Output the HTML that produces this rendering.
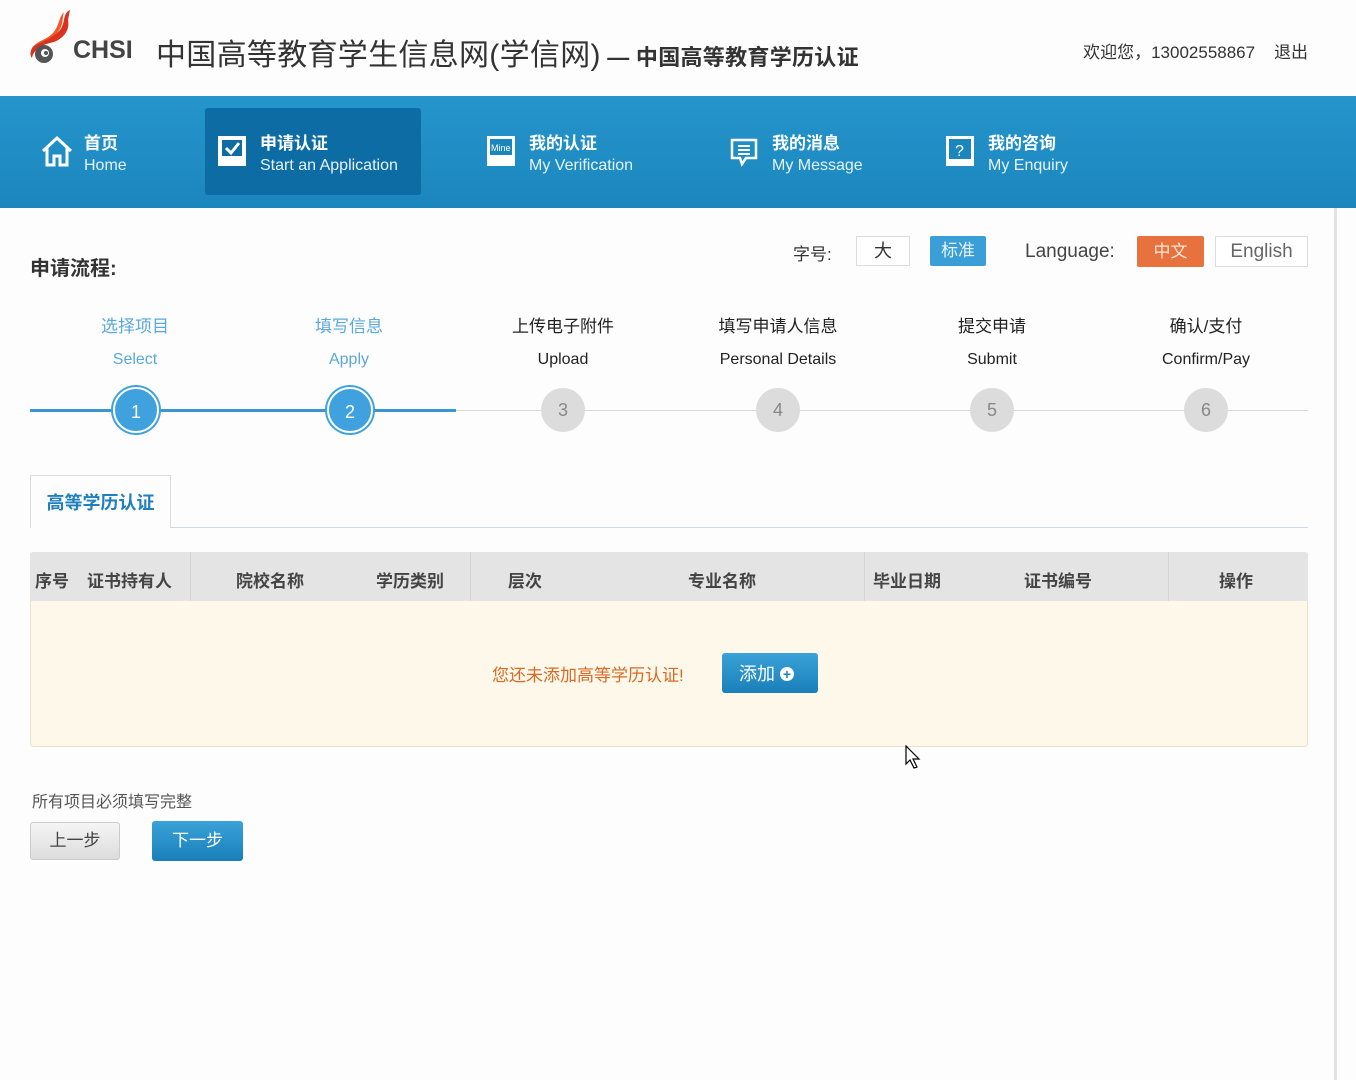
<!DOCTYPE html>
<html><head><meta charset="utf-8"><style>
*{margin:0;padding:0;box-sizing:border-box}
body{width:1356px;height:1080px;background:#fdfdfd;font-family:"Liberation Sans","Noto Sans CJK SC",sans-serif;position:relative;overflow:hidden;color:#333}
.a{position:absolute}
.nav{left:0;top:96px;width:1356px;height:112px;background:linear-gradient(#2595cc,#1b86bd)}
.item{top:108px;height:87px;color:#fff}
.item .t1{position:absolute;top:21px;font-size:17px;font-weight:bold;white-space:nowrap}
.item .t2{position:absolute;top:49px;font-size:16px;color:#e6f3fb;white-space:nowrap}
.step{width:160px;text-align:center;font-size:17px}
.c{width:46px;height:46px;border-radius:50%;text-align:center;line-height:46px;font-size:18px}
.cb{background:#3fa1de;color:#fff;border:2px solid #fff;box-shadow:0 0 0 2px #3fa1de}
.cg{background:#dcdcdc;color:#888;width:44px;height:44px;line-height:44px}
.th{top:567px;font-size:17px;font-weight:bold;color:#444}
</style></head><body>
<svg class="a" style="left:26px;top:8px" width="50" height="58" viewBox="0 0 50 58">
<path d="M44 2 C36 6 40 14 34 22 C28 30 14 30 6 40 C4 44 4 48 6 50 C8 40 18 36 28 34 C38 30 44 22 42 12 Z" fill="#d9321f"/>
<path d="M38 4 C32 10 34 18 26 26 C22 30 12 34 8 38 C16 34 26 30 32 24 C38 16 36 10 38 4Z" fill="#f05a2a"/>
<circle cx="18" cy="46" r="9" fill="#555"/><circle cx="19" cy="45" r="4" fill="#fff"/><circle cx="20" cy="45" r="2" fill="#555"/>
</svg>
<div class="a" style="left:73px;top:36px;font-size:25px;font-weight:bold;color:#444">CHSI</div>
<div class="a" style="left:156px;top:30px;font-size:30px;color:#333;white-space:nowrap;letter-spacing:0.3px">中国高等教育学生信息网(学信网)<span style="font-size:22px;font-weight:bold"> — 中国高等教育学历认证</span></div>
<div class="a" style="right:48px;top:38px;font-size:17px;color:#333;white-space:nowrap">欢迎您，13002558867 &nbsp;&nbsp;&nbsp;退出</div>
<div class="a nav"></div>
<div class="a" style="left:205px;top:108px;width:216px;height:87px;background:#0d6ca3;border-radius:3px"></div>
<div class="a item" style="left:40px">
<svg class="a" style="left:0;top:26px" width="34" height="34" viewBox="0 0 34 34"><path d="M3 17 L17 4 L31 17 M7 14 V31 H14 V22 H20 V31 H27 V14" fill="none" stroke="#fff" stroke-width="3"/></svg>
<div class="t1" style="left:44px">首页</div><div class="t2" style="left:44px">Home</div></div>
<div class="a item" style="left:216px">
<svg class="a" style="left:0;top:26px" width="34" height="34" viewBox="0 0 34 34"><rect x="2" y="2" width="28" height="30" fill="#fff"/><rect x="6" y="6" width="20" height="16" fill="#0d6ca3"/><path d="M10 14 L15 19 L23 9" stroke="#fff" stroke-width="3" fill="none"/></svg>
<div class="t1" style="left:44px">申请认证</div><div class="t2" style="left:44px">Start an Application</div></div>
<div class="a item" style="left:485px">
<svg class="a" style="left:0;top:26px" width="34" height="34" viewBox="0 0 34 34"><rect x="2" y="2" width="28" height="30" fill="#fff"/><rect x="5" y="5" width="22" height="16" fill="#1b86bd"/><text x="6" y="17" font-size="9" fill="#fff" font-family="Liberation Sans">Mine</text></svg>
<div class="t1" style="left:44px">我的认证</div><div class="t2" style="left:44px">My Verification</div></div>
<div class="a item" style="left:728px">
<svg class="a" style="left:0;top:28px" width="34" height="34" viewBox="0 0 34 34"><path d="M4 4 H28 V22 H18 L14 28 L12 22 H4 Z" fill="none" stroke="#fff" stroke-width="2.5"/><path d="M10 10 H22 M10 14 H22 M10 18 H22" stroke="#fff" stroke-width="2"/></svg>
<div class="t1" style="left:44px">我的消息</div><div class="t2" style="left:44px">My Message</div></div>
<div class="a item" style="left:944px">
<svg class="a" style="left:0;top:26px" width="34" height="34" viewBox="0 0 34 34"><rect x="2" y="2" width="28" height="30" fill="#fff"/><rect x="5" y="5" width="22" height="20" fill="#1b86bd"/><text x="11" y="22" font-size="16" fill="#fff" font-family="Liberation Sans">?</text></svg>
<div class="t1" style="left:44px">我的咨询</div><div class="t2" style="left:44px">My Enquiry</div></div>
<div class="a" style="left:1334px;top:208px;width:3px;height:872px;background:#e2e2e2"></div>
<div class="a" style="left:30px;top:252px;font-size:20px;font-weight:bold;color:#333">申请流程:</div>
<div class="a" style="left:793px;top:240px;font-size:17px">字号:</div>
<div class="a" style="left:856px;top:236px;width:54px;height:30px;border:1px solid #ddd;background:#fff;text-align:center;line-height:28px;font-size:18px">大</div>
<div class="a" style="left:930px;top:236px;width:56px;height:30px;background:#3a9fd6;color:#e8f4fb;text-align:center;line-height:30px;font-size:17px;border-radius:2px">标准</div>
<div class="a" style="left:1025px;top:241px;font-size:19px;color:#444">Language:</div>
<div class="a" style="left:1137px;top:236px;width:67px;height:31px;background:#e8723d;color:#fde5d8;text-align:center;line-height:31px;font-size:17px;border-radius:2px">中文</div>
<div class="a" style="left:1215px;top:236px;width:93px;height:31px;border:1px solid #ddd;background:#fff;text-align:center;line-height:29px;font-size:19px;color:#666">English</div>
<div class="a" style="left:30px;top:409px;width:426px;height:3px;background:#3a96d2"></div>
<div class="a" style="left:456px;top:410px;width:852px;height:1px;background:#d8d8d8"></div>
<div class="a step" style="left:55px;top:312px;color:#5aa9dc">选择项目<br><span style="font-size:16px;line-height:46px">Select</span></div>
<div class="a step" style="left:269px;top:312px;color:#5aa9dc">填写信息<br><span style="font-size:16px;line-height:46px">Apply</span></div>
<div class="a step" style="left:483px;top:312px;color:#222">上传电子附件<br><span style="font-size:16px;line-height:46px">Upload</span></div>
<div class="a step" style="left:688px;top:312px;width:180px;color:#222">填写申请人信息<br><span style="font-size:16px;line-height:46px">Personal Details</span></div>
<div class="a step" style="left:912px;top:312px;color:#222">提交申请<br><span style="font-size:16px;line-height:46px">Submit</span></div>
<div class="a step" style="left:1126px;top:312px;color:#222">确认/支付<br><span style="font-size:16px;line-height:46px">Confirm/Pay</span></div>
<div class="a c cb" style="left:113px;top:387px">1</div>
<div class="a c cb" style="left:327px;top:387px">2</div>
<div class="a c cg" style="left:541px;top:388px">3</div>
<div class="a c cg" style="left:756px;top:388px">4</div>
<div class="a c cg" style="left:970px;top:388px">5</div>
<div class="a c cg" style="left:1184px;top:388px">6</div>
<div class="a" style="left:30px;top:527px;width:1278px;height:1px;background:#cfd8e6"></div>
<div class="a" style="left:30px;top:475px;width:141px;height:53px;border:1px solid #ddd;border-bottom:none;background:#fdfdfd;color:#1f7fc0;font-size:18px;font-weight:bold;text-align:center;line-height:54px">高等学历认证</div>
<div class="a" style="left:30px;top:552px;width:1278px;height:195px;border:1px solid #e8e2cc;border-radius:3px;background:#fdf8e9"></div>
<div class="a" style="left:30px;top:552px;width:1278px;height:49px;background:#e4e4e4;border-radius:3px 3px 0 0"></div>
<div class="a" style="left:190px;top:552px;width:1px;height:49px;background:#d4d4d4"></div>
<div class="a" style="left:470px;top:552px;width:1px;height:49px;background:#d4d4d4"></div>
<div class="a" style="left:864px;top:552px;width:1px;height:49px;background:#d4d4d4"></div>
<div class="a" style="left:1168px;top:552px;width:1px;height:49px;background:#d4d4d4"></div>
<div class="a th" style="left:35px">序号</div>
<div class="a th" style="left:87px">证书持有人</div>
<div class="a th" style="left:236px">院校名称</div>
<div class="a th" style="left:376px">学历类别</div>
<div class="a th" style="left:508px">层次</div>
<div class="a th" style="left:688px">专业名称</div>
<div class="a th" style="left:873px">毕业日期</div>
<div class="a th" style="left:1024px">证书编号</div>
<div class="a th" style="left:1219px">操作</div>
<div class="a" style="left:492px;top:661px;font-size:17px;color:#d86a26">您还未添加高等学历认证!</div>
<div class="a" style="left:722px;top:653px;width:96px;height:40px;background:linear-gradient(#3aa2d8,#1a7fb9);border-radius:3px;color:#fff;font-size:18px;line-height:42px;padding-left:17px">添加 <span style="display:inline-block;width:14px;height:14px;border-radius:50%;background:#fff;color:#1f86c0;font-size:14px;line-height:14px;text-align:center;font-weight:bold;vertical-align:1px">+</span></div>
<svg class="a" style="left:905px;top:745px" width="18" height="26" viewBox="0 0 18 26"><path d="M1 1 V19 L5 15 L9 23 L12 22 L8 14 H14 Z" fill="#fff" stroke="#000" stroke-width="1.2"/></svg>
<div class="a" style="left:32px;top:788px;font-size:16px;color:#555">所有项目必须填写完整</div>
<div class="a" style="left:30px;top:822px;width:90px;height:38px;background:linear-gradient(#f5f5f5,#dcdcdc);border:1px solid #ccc;border-radius:3px;text-align:center;line-height:36px;font-size:17px;color:#444">上一步</div>
<div class="a" style="left:152px;top:821px;width:91px;height:40px;background:linear-gradient(#3aa2d8,#1a7fb9);border-radius:3px;text-align:center;line-height:40px;font-size:17px;color:#fff">下一步</div>
</body></html>
